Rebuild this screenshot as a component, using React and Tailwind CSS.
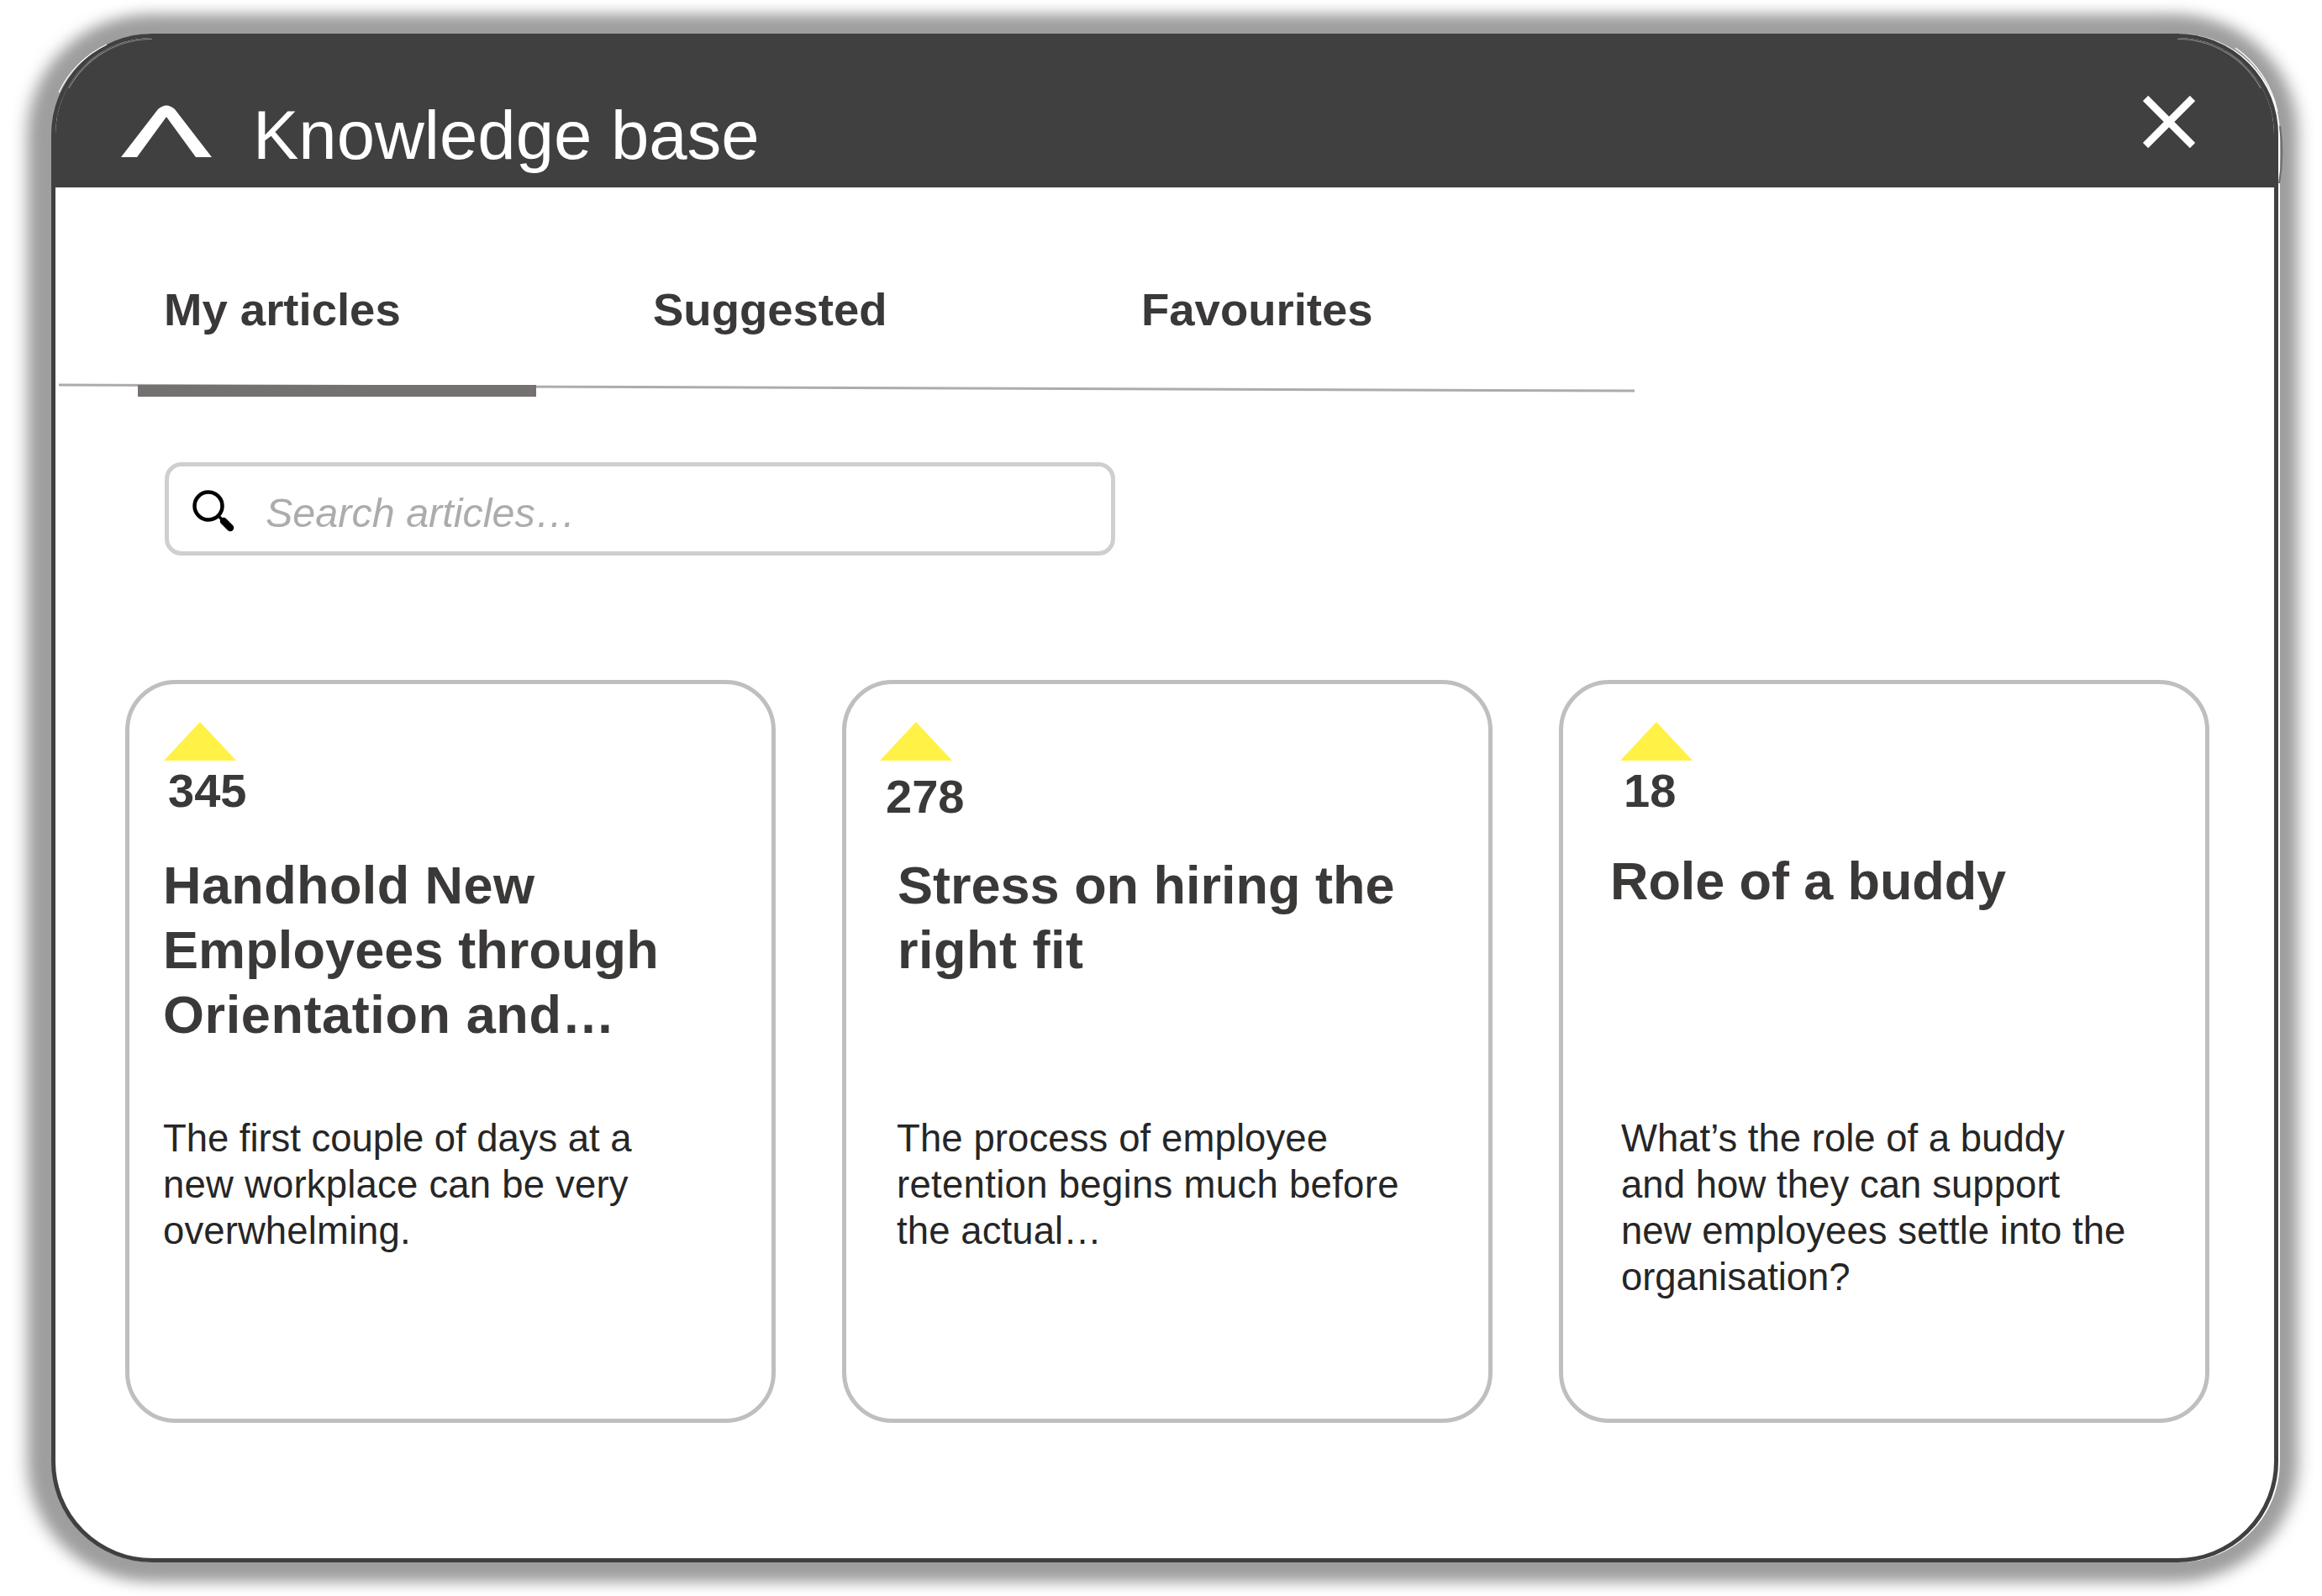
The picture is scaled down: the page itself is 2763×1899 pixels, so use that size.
const sans = "font-['Liberation_Sans',Arial,sans-serif]";

function Triangle({ className }) {
  return (
    <svg className={className} width="86" height="46" viewBox="0 0 86 46">
      <polygon points="43,0 86,46 0,46" fill="#fff145" />
    </svg>
  );
}

function Card({ count, title, desc, triClass, numClass, titleClass, descClass }) {
  return (
    <div className="w-[774px] h-[884px] shrink-0 rounded-[60px] border-[5px] border-[#bfbfbf] bg-white">
      <Triangle className={triClass} />
      <div className={`${numClass} text-[56px] leading-[60px] font-bold text-[#3b3838]`}>{count}</div>
      <h3 className={`${titleClass} text-[63px] leading-[77px] font-bold text-[#3b3838]`}>
        {title.map((l) => (
          <div key={l.t} className={`${l.c} whitespace-nowrap`}>{l.t}</div>
        ))}
      </h3>
      <p className={`${descClass} text-[45.5px] leading-[55px] text-[#262626]`}>
        {desc.map((l) => (
          <span key={l.t} className={`${l.c} block whitespace-nowrap`}>{l.t}</span>
        ))}
      </p>
    </div>
  );
}

export default function App() {
  return (
    <div className={`${sans} relative w-[2763px] h-[1899px] bg-white pt-[40px] pl-[61px] overflow-hidden`}>
      <div className="w-[2650px] h-[1819px] rounded-[120px] border-[5px] border-[#404040] bg-white overflow-hidden shadow-[2px_0_0_0_#fff,-10px_0_20px_18px_#9e9e9e,5px_0_20px_18px_#9e9e9e]">
        <header className="relative h-[178px] bg-[#404040] flex items-start pt-[69px] pl-[77px] pr-[94px]">
          <svg className="mt-[10px] shrink-0 blur-[0.7px]" width="110" height="64" viewBox="0 0 110 64">
            <path d="M1 63 L45 6 Q55 -3 65 6 L109 63 L90 63 L55 15 L20 63 Z" fill="#fff" />
          </svg>
          <h1 className="ml-[48px] mt-[2px] text-[81.5px] leading-[90px] text-white whitespace-nowrap">Knowledge base</h1>
          <svg className="ml-auto shrink-0" width="62" height="62" viewBox="0 0 62 62">
            <path d="M3 3 L59 59 M59 3 L3 59" stroke="#fff" strokeWidth="9" fill="none" />
          </svg>
          <svg className="absolute left-0 top-0" width="2640" height="178" viewBox="0 0 2640 178">
            <path d="M2525 1.5 A113.5 113.5 0 0 1 2624 60" stroke="#8a8686" strokeWidth="1.2" fill="none" />
            <path d="M115 1.5 A113.5 113.5 0 0 0 16 60" stroke="#8a8686" strokeWidth="1.2" fill="none" />
          </svg>
        </header>

        <nav className="relative h-[249px] pt-[114px] pl-[129px] flex items-start">
          <span className="w-[582px] text-[54.5px] leading-[64px] font-bold text-[#3b3838]">My articles</span>
          <span className="w-[581px] text-[54.5px] leading-[64px] font-bold text-[#3b3838]">Suggested</span>
          <span className="text-[54.5px] leading-[64px] font-bold text-[#3b3838]">Favourites</span>
          <svg className="absolute left-[4px] top-[233px]" width="1875" height="12" viewBox="0 0 1875 12">
            <line x1="0" y1="2" x2="1875" y2="9" stroke="#aeabab" strokeWidth="3" />
          </svg>
          <div className="absolute left-[98px] top-[235px] w-[474px] h-[14px] bg-[#767171]" />
        </nav>

        <div className="ml-[130px] mt-[78px] w-[1131px] h-[111px] rounded-[20px] border-[5px] border-[#d0cece] flex items-center pl-[28px]">
          <svg className="mt-[5px] shrink-0" width="50" height="50" viewBox="0 0 50 50">
            <circle cx="19" cy="19" r="16.5" stroke="#000" strokeWidth="4.5" fill="none" />
            <line x1="31" y1="31" x2="37" y2="37" stroke="#000" strokeWidth="3.5" />
            <line x1="37" y1="37" x2="45" y2="45" stroke="#000" strokeWidth="8.5" strokeLinecap="round" />
          </svg>
          <span className="ml-[37px] mt-[8px] text-[48.5px] leading-[56px] italic text-[#aeabab]">Search articles…</span>
        </div>

        <div className="ml-[83px] mt-[148px] flex gap-[79px]">
          <Card
            count="345"
            title={[
              { t: "Handhold New", c: "tracking-[0.4px]" },
              { t: "Employees through", c: "tracking-[0.1px]" },
              { t: "Orientation and…", c: "tracking-[0.6px]" },
            ]}
            desc={[
              { t: "The first couple of days at a", c: "tracking-[-0.05px]" },
              { t: "new workplace can be very", c: "tracking-[0.2px]" },
              { t: "overwhelming.", c: "tracking-[0.1px]" },
            ]}
            triClass="ml-[41px] mt-[45px]"
            numClass="ml-[46px] mt-[6px]"
            titleClass="ml-[40px] mt-[44px] h-[231px]"
            descClass="ml-[40px] mt-[81px]"
          />
          <Card
            count="278"
            title={[
              { t: "Stress on hiring the", c: "tracking-normal" },
              { t: "right fit", c: "tracking-[0.5px]" },
            ]}
            desc={[
              { t: "The process of employee", c: "tracking-[0.1px]" },
              { t: "retention begins much before", c: "tracking-[0.3px]" },
              { t: "the actual…", c: "tracking-[0.1px]" },
            ]}
            triClass="ml-[40px] mt-[45px]"
            numClass="ml-[47px] mt-[13px]"
            titleClass="ml-[61px] mt-[37px] h-[231px]"
            descClass="ml-[60px] mt-[81px]"
          />
          <Card
            count="18"
            title={[{ t: "Role of a buddy", c: "tracking-[-0.1px]" }]}
            desc={[
              { t: "What’s the role of a buddy", c: "tracking-normal" },
              { t: "and how they can support", c: "tracking-[0.05px]" },
              { t: "new employees settle into the", c: "tracking-[0.03px]" },
              { t: "organisation?", c: "tracking-[-0.05px]" },
            ]}
            triClass="ml-[68px] mt-[45px]"
            numClass="ml-[72px] mt-[6px]"
            titleClass="ml-[56px] mt-[39px] h-[235px]"
            descClass="ml-[69px] mt-[82px]"
          />
        </div>
      </div>
      <svg className="absolute left-0 top-0" width="2763" height="300" viewBox="0 0 2763 300">
        <path d="M2660 57 A122 122 0 0 1 2710 133" stroke="#ffffff" strokeWidth="1.2" fill="none" />
        <path d="M127 53 A122 122 0 0 0 70 110" stroke="#ffffff" strokeWidth="1.2" fill="none" />
        <path d="M2713 150 C2716 170 2716 195 2712 218" stroke="#6f6b6b" strokeWidth="2" fill="none" />
      </svg>
    </div>
  );
}
